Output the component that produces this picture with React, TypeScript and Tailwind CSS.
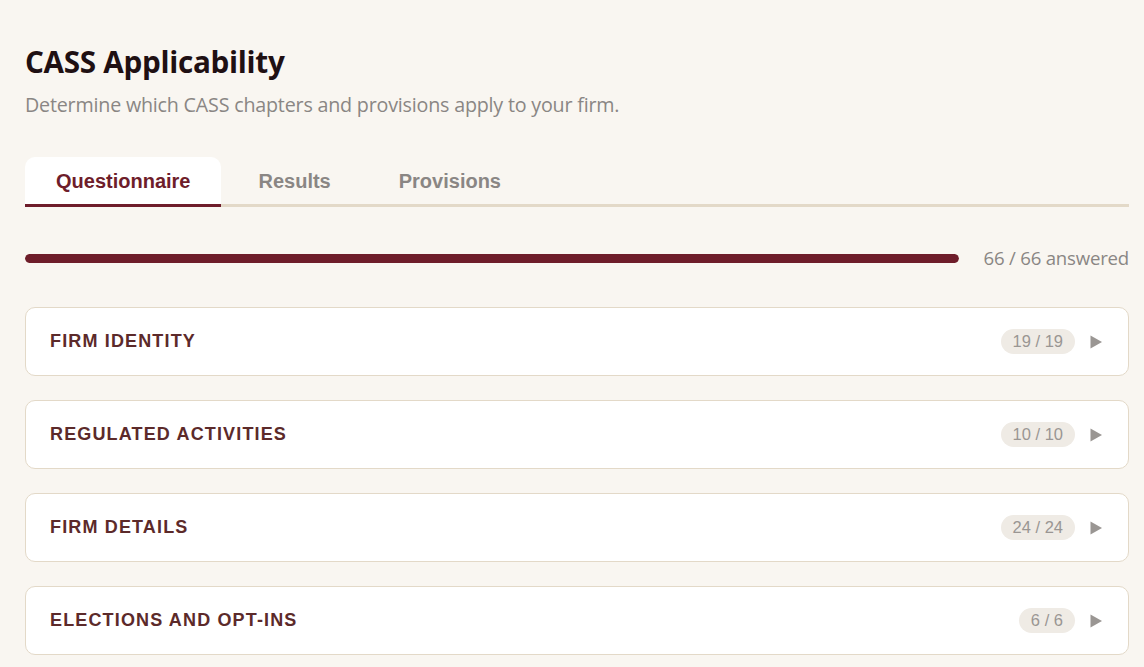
import React, { useState } from "react";

interface Section {
  title: string;
  answered: number;
  total: number;
}

const sections: Section[] = [
  { title: "Firm Identity", answered: 19, total: 19 },
  { title: "Regulated Activities", answered: 10, total: 10 },
  { title: "Firm Details", answered: 24, total: 24 },
  { title: "Elections and Opt-ins", answered: 6, total: 6 },
];

const tabs = ["Questionnaire", "Results", "Provisions"];

export default function App() {
  const [active, setActive] = useState("Questionnaire");
  const answered = 66;
  const total = 66;

  return (
    <div className="min-h-screen bg-[#f9f6f1] pl-[25px] pr-[15px] pt-[41px] font-['Liberation_Sans',Arial,sans-serif]">
      {/* Header */}
      <h1 className="text-[29.7px] font-bold leading-[42px] text-[#1f1013] font-['Open_Sans',sans-serif] tracking-[-0.3px]">
        CASS Applicability
      </h1>
      <p className="mt-[9px] text-[19.7px] leading-[26px] text-[#8a8684] font-['Open_Sans',sans-serif] tracking-[-0.2px]">
        Determine which CASS chapters and provisions apply to your firm.
      </p>

      {/* Tabs */}
      <div className="mt-[39px] flex gap-[6px] border-b-[3px] border-[#e3d9c8]">
        {tabs.map((tab) => {
          const isActive = tab === active;
          return (
            <button
              key={tab}
              onClick={() => setActive(tab)}
              className={`-mb-[3px] h-[50px] px-[31px] text-[20px] font-bold rounded-t-[10px] border-b-[3px] ${
                isActive
                  ? "bg-white text-[#6e1d2a] border-[#6e1d2a]"
                  : "bg-transparent text-[#8a8684] border-transparent"
              }`}
            >
              {tab}
            </button>
          );
        })}
      </div>

      {/* Progress */}
      <div className="mt-[39px] flex items-center gap-6">
        <div className="h-[9px] flex-1 rounded-full bg-[#e8e1d6] overflow-hidden">
          <div className="h-full rounded-full bg-[#6e1d2a]" style={{ width: `${(answered / total) * 100}%` }} />
        </div>
        <span className="text-[18.6px] leading-[24px] text-[#8a8684] font-['Open_Sans',sans-serif] tracking-[-0.2px]">
          {answered} / {total} answered
        </span>
      </div>

      {/* Sections */}
      <div className="mt-[37px] flex flex-col gap-[24px]">
        {sections.map((s) => (
          <div
            key={s.title}
            className="flex h-[69px] items-center justify-between rounded-[10px] border border-[#e3d9c8] bg-white pl-[24px] pr-[26px]"
          >
            <h2 className="text-[18px] font-bold uppercase tracking-[1.15px] text-[#5c2a2a]">{s.title}</h2>
            <div className="flex items-center gap-[15px]">
              <span className="flex h-[25px] items-center rounded-full bg-[#efebe5] px-[12px] text-[16.5px] text-[#9a9693]">
                {s.answered} / {s.total}
              </span>
              <svg width="12" height="14" viewBox="0 0 12 14" className="text-[#9a9693]">
                <path d="M0.5 0.5 L12 7 L0.5 13.5 Z" fill="currentColor" />
              </svg>
            </div>
          </div>
        ))}
      </div>
    </div>
  );
}
